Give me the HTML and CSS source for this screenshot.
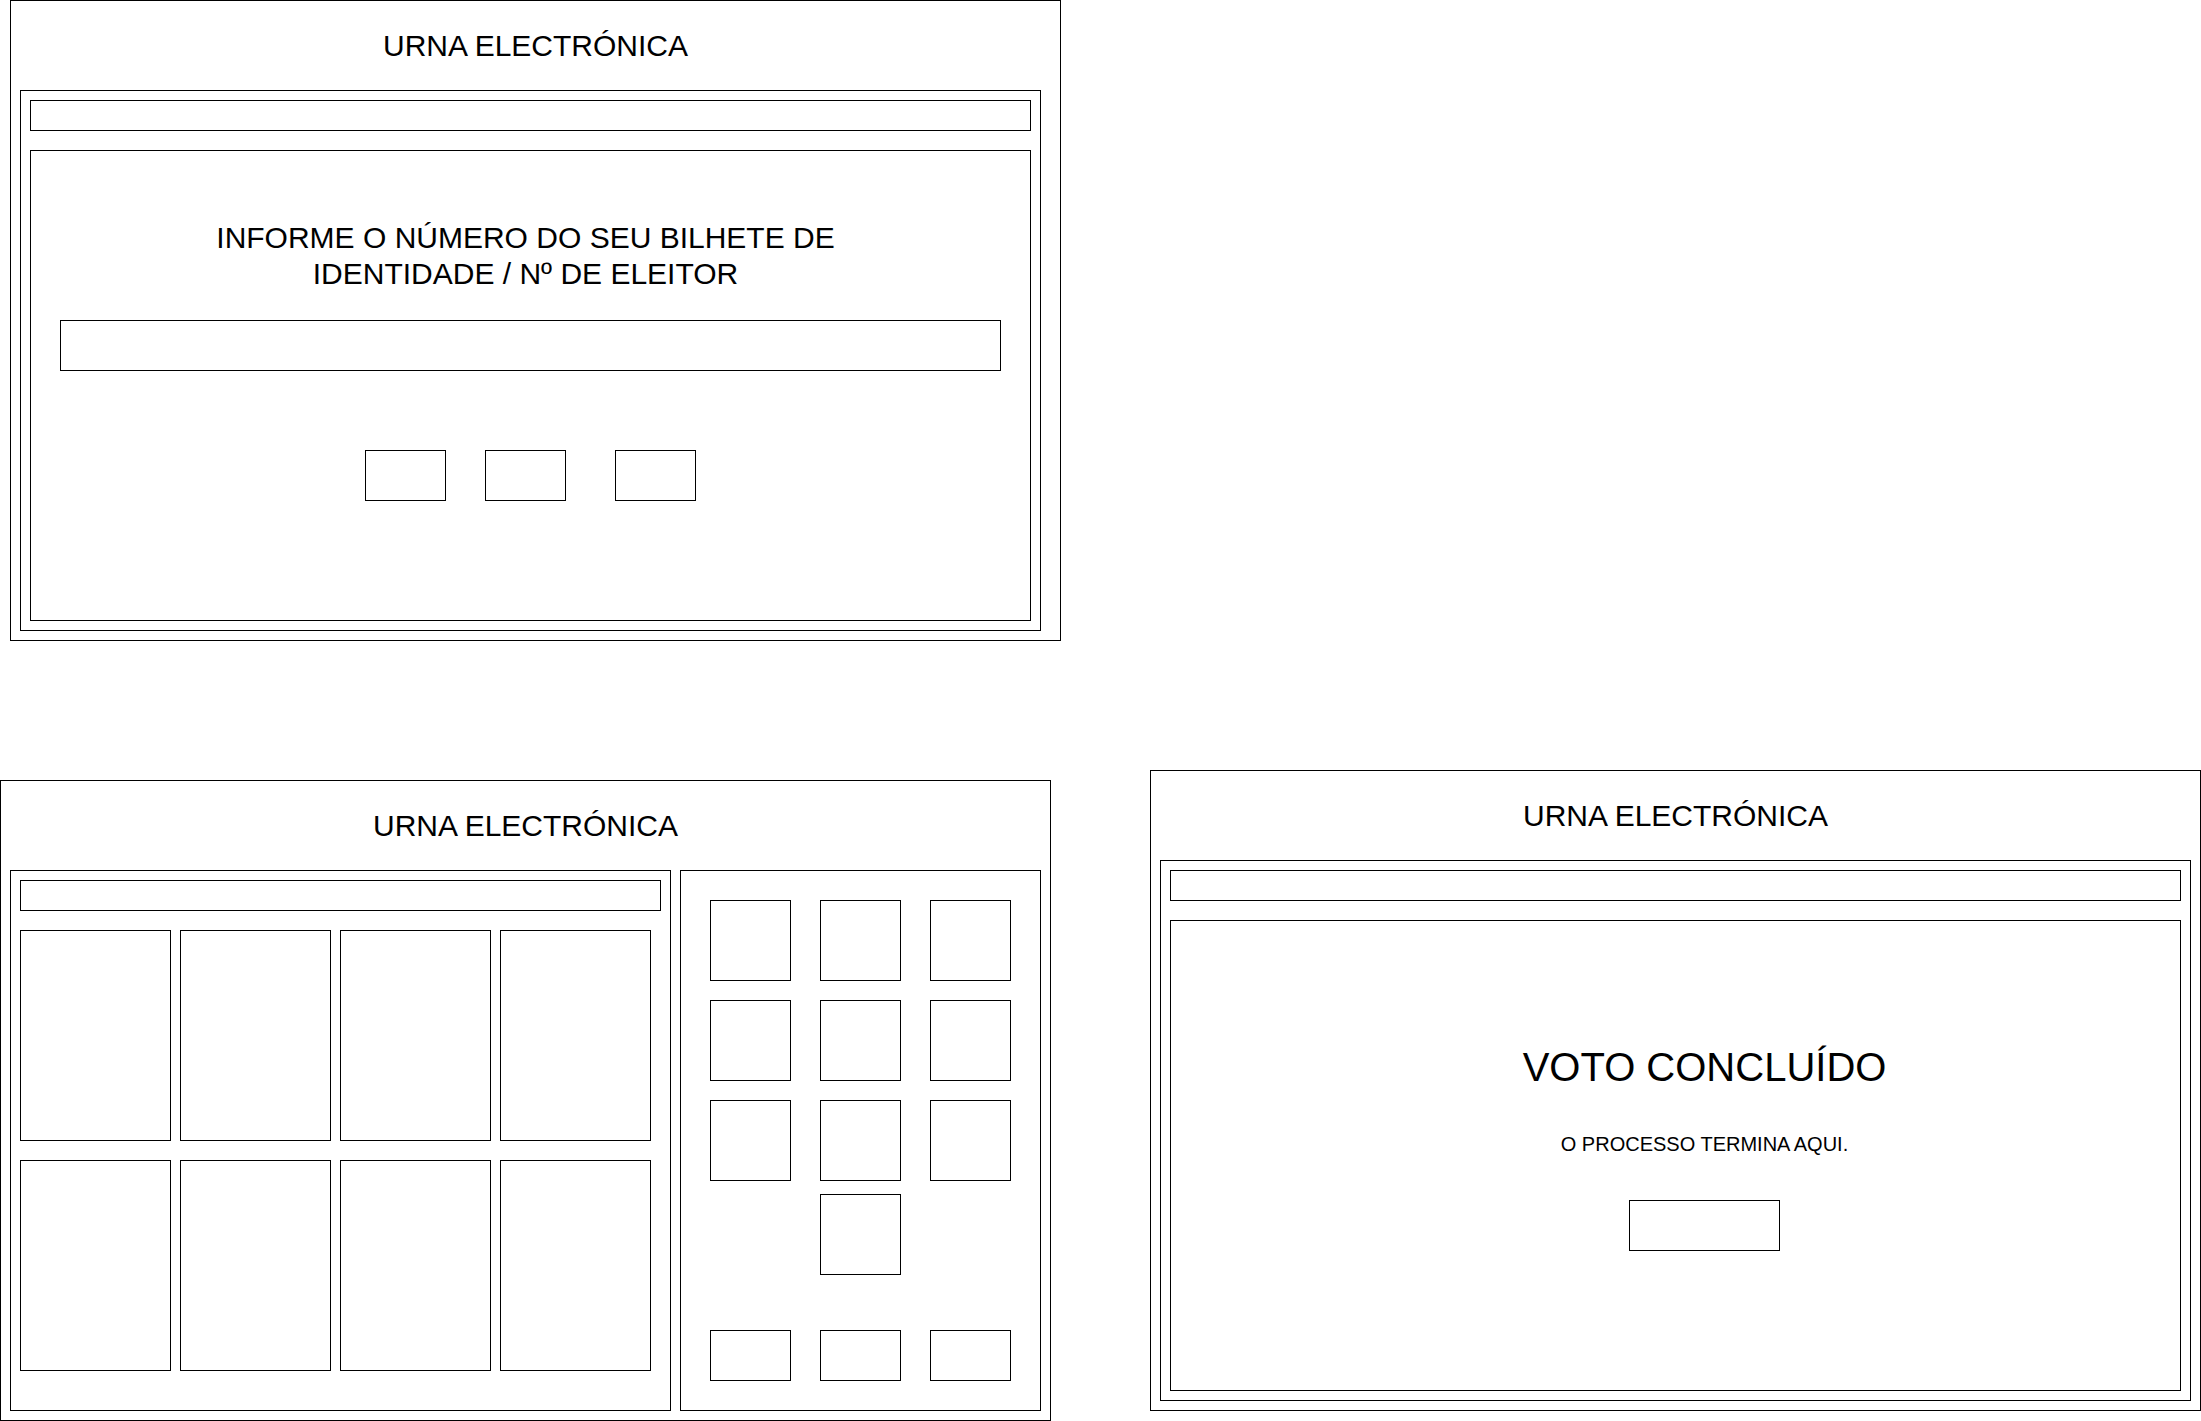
FILE: index.html
```html
<!DOCTYPE html>
<html lang="pt">
<head>
<meta charset="utf-8">
<title>Urna Electrónica</title>
<link rel="stylesheet" href="styles.css">
</head>
<body>
<div class="canvas">

  <section class="frame frame--id">
    <header class="frame-title">URNA ELECTRÓNICA</header>
    <div class="device">
      <div class="status-bar"></div>
      <div class="screen screen--id">
        <h2 class="prompt">INFORME O NÚMERO DO SEU BILHETE DE<br>IDENTIDADE / Nº DE ELEITOR</h2>
        <div class="id-input"></div>
        <div class="action-row">
          <div class="btn"></div>
          <div class="btn btn--gap1"></div>
          <div class="btn btn--gap2"></div>
        </div>
      </div>
    </div>
  </section>

  <section class="frame frame--vote">
    <header class="frame-title">URNA ELECTRÓNICA</header>
    <div class="vote-body">
      <div class="ballot">
        <div class="ballot-bar"></div>
        <div class="cards">
          <div class="card"></div><div class="card"></div><div class="card"></div><div class="card"></div>
          <div class="card"></div><div class="card"></div><div class="card"></div><div class="card"></div>
        </div>
      </div>
      <div class="keypad">
        <div class="keys">
          <div class="key"></div><div class="key"></div><div class="key"></div>
          <div class="key"></div><div class="key"></div><div class="key"></div>
          <div class="key"></div><div class="key"></div><div class="key"></div>
        </div>
        <div class="key key--zero"></div>
        <div class="fn-keys">
          <div class="fn-key"></div><div class="fn-key"></div><div class="fn-key"></div>
        </div>
      </div>
    </div>
  </section>

  <section class="frame frame--done">
    <header class="frame-title">URNA ELECTRÓNICA</header>
    <div class="device device--wide">
      <div class="status-bar"></div>
      <div class="screen screen--done">
        <h2 class="done-title">VOTO CONCLUÍDO</h2>
        <p class="done-text">O PROCESSO TERMINA AQUI.</p>
        <div class="done-btn"></div>
      </div>
    </div>
  </section>

</div>
</body>
</html>
```

FILE: styles.css
```css
* { box-sizing: border-box; }

html, body {
  margin: 0;
  padding: 0;
  background: #ffffff;
}

body {
  font-family: "Liberation Sans", Arial, Helvetica, sans-serif;
  color: #000000;
}

.canvas {
  position: relative;
  width: 2201px;
  height: 1421px;
  overflow: hidden;
}

/* ---------- frames (windows on a free canvas) ---------- */
.frame {
  position: absolute;
  width: 1051px;
  height: 641px;
  border: 1px solid #000;
  background: #fff;
  display: flex;
  flex-direction: column;
}

.frame--id   { left: 10px;   top: 0; }
.frame--vote { left: 0;      top: 780px; }
.frame--done { left: 1150px; top: 770px; }

.frame-title {
  height: 89px;
  flex: none;
  display: flex;
  align-items: center;
  justify-content: center;
  font-size: 30px;
  line-height: 34px;
  padding-top: 1px;
}

/* ---------- device (id + done screens) ---------- */
.device {
  margin-left: 9px;
  width: 1021px;
  height: 541px;
  border: 1px solid #000;
  padding: 9px;
  display: flex;
  flex-direction: column;
  gap: 19px;
}

.device--wide {
  width: 1031px;
}

.status-bar {
  height: 31px;
  border: 1px solid #000;
  flex: none;
}

.screen {
  height: 471px;
  border: 1px solid #000;
  flex: none;
  display: flex;
  flex-direction: column;
}

/* ---------- identification screen ---------- */
.screen--id {
  padding: 69px 29px 0 29px;
  align-items: flex-start;
}

.prompt {
  margin: 0;
  width: 100%;
  padding-right: 10px;
  font-size: 30px;
  font-weight: normal;
  line-height: 36px;
  text-align: center;
}

.id-input {
  margin-top: 28px;
  width: 941px;
  height: 51px;
  border: 1px solid #000;
}

.action-row {
  margin-top: 79px;
  margin-left: 305px;
  display: flex;
}

.btn {
  width: 81px;
  height: 51px;
  border: 1px solid #000;
}

.btn--gap1 { margin-left: 39px; }
.btn--gap2 { margin-left: 49px; }

/* ---------- vote screen ---------- */
.vote-body {
  display: flex;
  gap: 9px;
  margin-left: 9px;
}

.ballot {
  width: 661px;
  height: 541px;
  border: 1px solid #000;
  padding: 9px;
  display: flex;
  flex-direction: column;
  gap: 19px;
}

.ballot-bar {
  width: 641px;
  height: 31px;
  border: 1px solid #000;
}

.cards {
  display: grid;
  grid-template-columns: repeat(4, 151px);
  grid-auto-rows: 211px;
  column-gap: 9px;
  row-gap: 19px;
}

.card {
  border: 1px solid #000;
}

.keypad {
  width: 361px;
  height: 541px;
  border: 1px solid #000;
  padding: 29px 0 0 29px;
  display: flex;
  flex-direction: column;
}

.keys {
  display: grid;
  grid-template-columns: repeat(3, 81px);
  grid-auto-rows: 81px;
  column-gap: 29px;
  row-gap: 19px;
}

.key {
  border: 1px solid #000;
}

.key--zero {
  width: 81px;
  height: 81px;
  margin-top: 13px;
  margin-left: 110px;
}

.fn-keys {
  margin-top: 55px;
  display: flex;
  gap: 29px;
}

.fn-key {
  width: 81px;
  height: 51px;
  border: 1px solid #000;
}

/* ---------- done screen ---------- */
.screen--done {
  align-items: center;
  padding: 123px 0 0 58px;
}

.done-title {
  margin: 0;
  font-size: 40px;
  font-weight: normal;
  line-height: 46px;
}

.done-text {
  margin: 43px 0 0 0;
  font-size: 20px;
  line-height: 23px;
}

.done-btn {
  margin-top: 44px;
  width: 151px;
  height: 51px;
  border: 1px solid #000;
}
```
